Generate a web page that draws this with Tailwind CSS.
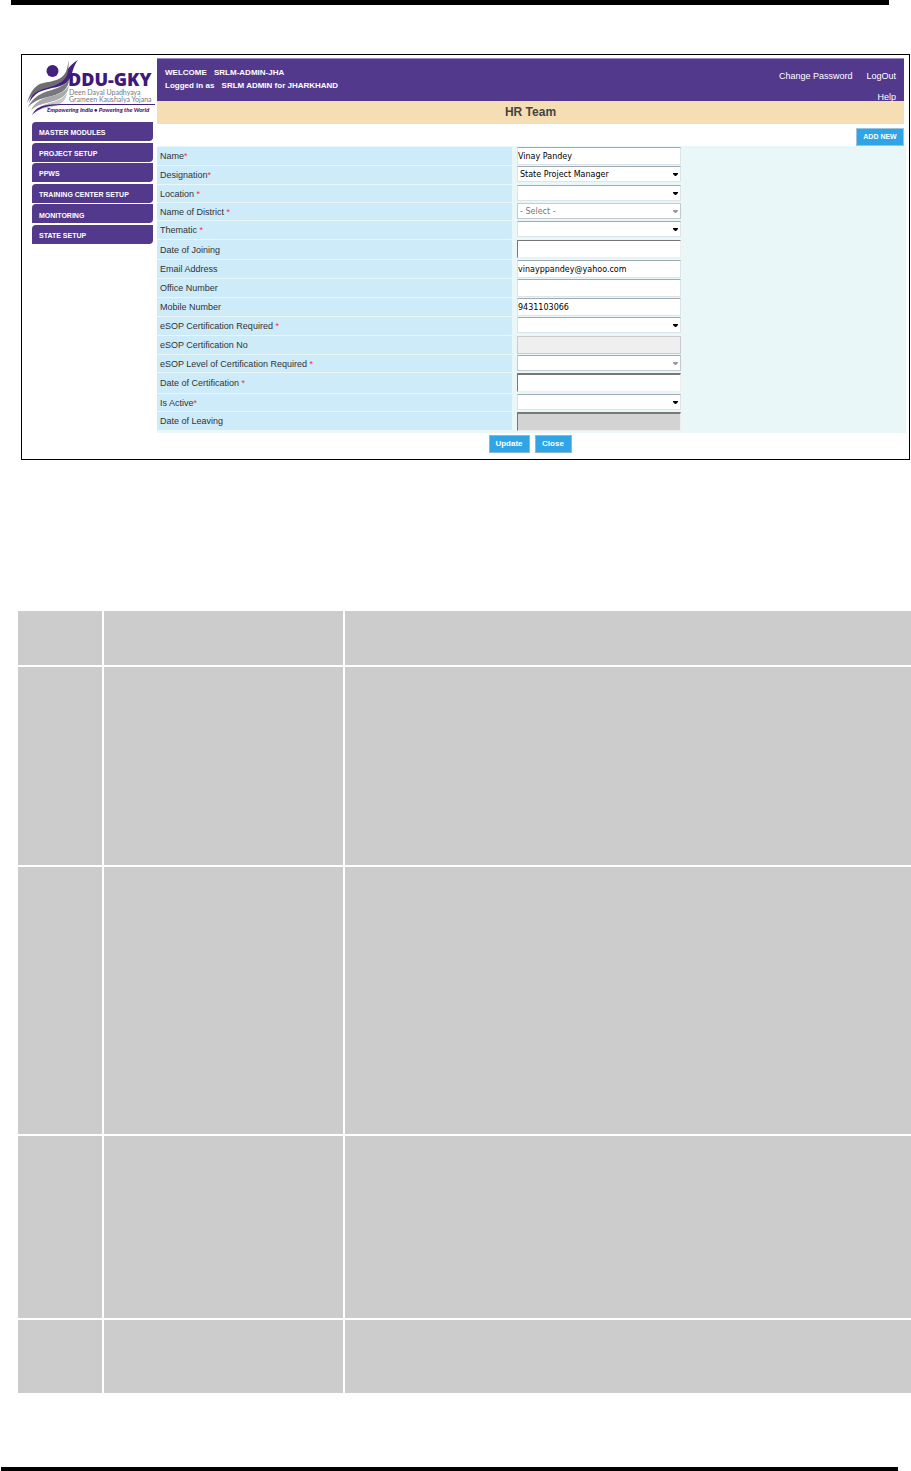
<!DOCTYPE html>
<html lang="en">
<head>
<meta charset="UTF-8">
<meta name="viewport" content="width=device-width, initial-scale=1.0">
<title>HR Team</title>
<script src="https://cdn.jsdelivr.net/npm/@tailwindcss/browser@4"></script>
</head>
<body class="bg-white font-['Liberation_Sans',sans-serif] text-[#333]">

<div class="ml-[11px] mr-[22px] h-[5px] bg-black"></div>

<!-- Application window -->
<main class="mt-[49px] ml-[21px] mr-px flex min-h-[406px] border border-black">

  <!-- Sidebar -->
  <aside class="w-[135px] shrink-0 pl-[5px] pt-1">
    <svg class="block w-full" viewBox="0 0 130 58" role="img" aria-label="DDU-GKY">
      <circle cx="25.500" cy="12" r="6" fill="#45207f"/>
      <path d="M51 1C46 7 46 14 42 21C37 29 23 28 12 33C7 36 4 40 2 44C4 36 8 31 16 28C26 25 35 24 38 16C40 10 44 5 51 1Z" fill="#45207f"/>
      <path d="M42 1C40 7 41 12 36 17C29 24 17 22 11 26C4 31 2 38 0 44C5 34 12 31 20 29C30 26 37 23 40 16C42 11 41 7 42 1Z" fill="#6d6e71"/>
      <path d="M42 20C37 29 25 30 16 34C9 37 4 42 1 48C9 40 17 39 25 37C36 34 42 29 42 20Z" fill="#77787b"/>
      <path d="M42 26C38 34 29 36 21 38C13 40 7 45 4 51C12 45 19 44 27 42C37 39 41 34 42 26Z" fill="#a9aaad"/>
      <path d="M40 34C36 40 30 42 22 44C15 46 10 49 7 53C15 49 22 49 28 47C35 45 39 41 40 34Z" fill="#c8c8cb"/>
      <path d="M5 56C10 46 19 45 41 45H128V46H41C20 46 14 48 5 56Z" fill="#45207f"/>
      <text x="41" y="27" class="fill-[#3d1a7c] font-['Open_Sans',sans-serif] text-[18px] font-extrabold">DDU-GKY</text>
      <text x="42" y="36" class="fill-[#77787b] font-['Lato',sans-serif] text-[7px]">Deen Dayal Upadhyaya</text>
      <text x="42" y="43" class="fill-[#77787b] font-['Lato',sans-serif] text-[7px]">Grameen Kaushalya Yojana</text>
      <text x="20" y="53" class="fill-[#3d1a7c] font-['Lato',sans-serif] text-[6px] font-black italic">Empowering India • Powering the World</text>
    </svg>
    <nav class="mt-[5px] mr-1 ml-[5px] flex h-[122px] flex-col justify-between text-[7px] font-bold text-white">
      <a href="#" class="flex h-[19px] items-center rounded-tl rounded-br bg-[#53398c] pt-1 pl-[7px]">MASTER MODULES</a>
      <a href="#" class="flex h-[19px] items-center rounded-tl rounded-br bg-[#53398c] pt-1 pl-[7px]">PROJECT SETUP</a>
      <a href="#" class="flex h-[19px] items-center rounded-tl rounded-br bg-[#53398c] pt-1 pl-[7px]">PPWS</a>
      <a href="#" class="flex h-[19px] items-center rounded-tl rounded-br bg-[#53398c] pt-1 pl-[7px]">TRAINING CENTER SETUP</a>
      <a href="#" class="flex h-[19px] items-center rounded-tl rounded-br bg-[#53398c] pt-1 pl-[7px]">MONITORING</a>
      <a href="#" class="flex h-[19px] items-center rounded-tl rounded-br bg-[#53398c] pt-1 pl-[7px]">STATE SETUP</a>
    </nav>
  </aside>

  <div class="min-w-0 flex-1 pt-[3px]">
    <!-- Header -->
    <header class="mr-[5px] flex h-[43px] justify-between border-t border-[#9a8bbd] bg-[#53398c] text-white">
      <div class="pt-[7px] pl-2 text-[8px] leading-[13px] font-bold">
        <p>WELCOME <span class="ml-[5px]">SRLM-ADMIN-JHA</span></p>
        <p>Logged in as <span class="ml-[5px]">SRLM ADMIN for JHARKHAND</span></p>
      </div>
      <div class="pt-[7px] pr-2 text-right text-[9px] leading-[21px]">
        <div class="flex gap-[14px]">
          <a href="#">Change Password</a>
          <a href="#">LogOut</a>
        </div>
        <a href="#" class="block">Help</a>
      </div>
    </header>
    <h1 class="mr-[5px] h-[23px] bg-[#f5deb3] text-center text-[12px] leading-[23px] font-bold text-[#444]">HR Team</h1>
    <div class="mr-[5px] flex justify-end pt-1">
      <button class="h-[18px] w-12 border border-[#9cc4dc] bg-[#2fa4e7] text-[7px] font-bold text-white">ADD NEW</button>
    </div>

    <!-- HR team form -->
    <form>
      <div class="mr-[3px] flex flex-col gap-px bg-[#eaf7f9] pt-px pb-[3px] text-[9px] font-medium [&_em]:text-red-500 [&_em]:not-italic [&_input]:block [&_input]:w-[164px] [&_label]:flex [&_label]:w-[355px] [&_label]:items-center [&_label]:bg-[#cdebf9] [&_label]:pt-[2px] [&_label]:pl-[3px] [&_label]:whitespace-pre [&_select]:block [&_select]:h-4 [&_select]:w-[164px] [&_select]:appearance-none">
        <div class="flex h-[18px] gap-[5px]">
          <label for="name">Name<em>*</em></label>
          <input id="name" type="text" value="Vinay Pandey" class="h-[18px] border border-t-[#9eabb3] border-[#dde3e8] bg-white font-['DejaVu_Sans',sans-serif] text-[8px] text-black">
        </div>
        <div class="flex h-[18px] gap-[5px]">
          <label for="designation">Designation<em>*</em></label>
          <div class="relative">
            <select id="designation" class="border border-t-[#9eabb3] border-[#dde3e8] bg-white pt-px pl-[2px] font-['DejaVu_Sans',sans-serif] text-[8px] text-black"><option>State Project Manager</option></select>
            <svg class="pointer-events-none absolute top-[7px] right-[3px] h-[3px] w-[5px]" viewBox="0 0 5 3"><path d="M0 0H5V1L3 3H2L0 1Z" fill="#000"/></svg>
          </div>
        </div>
        <div class="flex h-[17px] gap-[5px]">
          <label for="location">Location <em>*</em></label>
          <div class="relative">
            <select id="location" class="border border-t-[#9eabb3] border-[#dde3e8] bg-white"><option></option></select>
            <svg class="pointer-events-none absolute top-[7px] right-[3px] h-[3px] w-[5px]" viewBox="0 0 5 3"><path d="M0 0H5V1L3 3H2L0 1Z" fill="#000"/></svg>
          </div>
        </div>
        <div class="flex h-[17px] gap-[5px]">
          <label for="district">Name of District <em>*</em></label>
          <div class="relative">
            <select id="district" disabled class="border border-[#c4cacd] bg-white pt-px pl-[2px] font-['DejaVu_Sans',sans-serif] text-[8px] text-[#777]"><option>- Select -</option></select>
            <svg class="pointer-events-none absolute top-[7px] right-[3px] h-[3px] w-[5px]" viewBox="0 0 5 3"><path d="M0 0H5V1L3 3H2L0 1Z" fill="#999"/></svg>
          </div>
        </div>
        <div class="flex h-[18px] gap-[5px]">
          <label for="thematic">Thematic <em>*</em></label>
          <div class="relative">
            <select id="thematic" class="border border-t-[#9eabb3] border-[#dde3e8] bg-white"><option></option></select>
            <svg class="pointer-events-none absolute top-[7px] right-[3px] h-[3px] w-[5px]" viewBox="0 0 5 3"><path d="M0 0H5V1L3 3H2L0 1Z" fill="#000"/></svg>
          </div>
        </div>
        <div class="flex h-[19px] gap-[5px]">
          <label for="joining">Date of Joining</label>
          <input id="joining" type="text" class="h-[18px] border border-t-[#777] border-l-[#777] border-[#eee] bg-white">
        </div>
        <div class="flex h-[18px] gap-[5px]">
          <label for="email">Email Address</label>
          <input id="email" type="text" value="vinayppandey@yahoo.com" class="h-[18px] border border-t-[#9eabb3] border-[#dde3e8] bg-white font-['DejaVu_Sans',sans-serif] text-[8px] text-black">
        </div>
        <div class="flex h-[18px] gap-[5px]">
          <label for="office">Office Number</label>
          <input id="office" type="text" class="h-[18px] border border-t-[#9eabb3] border-[#dde3e8] bg-white">
        </div>
        <div class="flex h-[18px] gap-[5px]">
          <label for="mobile">Mobile Number</label>
          <input id="mobile" type="text" value="9431103066" class="h-[18px] border border-t-[#9eabb3] border-[#dde3e8] bg-white font-['DejaVu_Sans',sans-serif] text-[8px] text-black">
        </div>
        <div class="flex h-[18px] gap-[5px]">
          <label for="esop">eSOP Certification Required <em>*</em></label>
          <div class="relative">
            <select id="esop" class="border border-t-[#9eabb3] border-[#dde3e8] bg-white"><option></option></select>
            <svg class="pointer-events-none absolute top-[7px] right-[3px] h-[3px] w-[5px]" viewBox="0 0 5 3"><path d="M0 0H5V1L3 3H2L0 1Z" fill="#000"/></svg>
          </div>
        </div>
        <div class="flex h-[18px] gap-[5px]">
          <label for="esop-no">eSOP Certification No</label>
          <input id="esop-no" type="text" disabled class="h-[18px] border border-[#c8cccd] bg-[#efefef]">
        </div>
        <div class="flex h-[17px] gap-[5px]">
          <label for="esop-level">eSOP Level of Certification Required <em>*</em></label>
          <div class="relative">
            <select id="esop-level" disabled class="border border-t-[#9eabb3] border-[#c4cacd] bg-white"><option></option></select>
            <svg class="pointer-events-none absolute top-[7px] right-[3px] h-[3px] w-[5px]" viewBox="0 0 5 3"><path d="M0 0H5V1L3 3H2L0 1Z" fill="#999"/></svg>
          </div>
        </div>
        <div class="flex h-[20px] gap-[5px]">
          <label for="certified">Date of Certification <em>*</em></label>
          <input id="certified" type="text" class="h-[19px] border border-t-2 border-t-[#777] border-l-[#777] border-[#eee] bg-white">
        </div>
        <div class="flex h-[17px] gap-[5px]">
          <label for="active">Is Active<em>*</em></label>
          <div class="relative">
            <select id="active" class="border border-t-[#9eabb3] border-[#dde3e8] bg-white"><option></option></select>
            <svg class="pointer-events-none absolute top-[7px] right-[3px] h-[3px] w-[5px]" viewBox="0 0 5 3"><path d="M0 0H5V1L3 3H2L0 1Z" fill="#000"/></svg>
          </div>
        </div>
        <div class="flex h-[18px] gap-[5px]">
          <label for="leaving">Date of Leaving</label>
          <input id="leaving" type="text" disabled class="h-[19px] border border-t-2 border-t-[#777] border-l-[#777] border-[#eee] bg-[#d3d3d3]">
        </div>
      </div>
      <div class="mr-[6px] flex justify-center gap-[5px] pt-[2px]">
        <button type="button" class="h-[18px] w-[41px] border border-[#8fb8d0] bg-[#2fa4e7] text-[8px] font-bold text-white">Update</button>
        <button type="button" class="h-[18px] w-[37px] border border-[#8fb8d0] bg-[#2fa4e7] text-[8px] font-bold text-white">Close</button>
      </div>
    </form>
  </div>
</main>

<!-- Description table -->
<table class="mt-[151px] ml-[18px] w-[calc(100%-18px)] table-fixed border-separate border-spacing-0 [&_td]:border-white [&_td]:bg-[#ccc]">
  <colgroup><col class="w-[86px]"><col class="w-[241px]"><col></colgroup>
  <tbody>
    <tr class="h-14"><td class="border-r-2 border-b-2"></td><td class="border-r-2 border-b-2"></td><td class="border-b-2"></td></tr>
    <tr class="h-[200px]"><td class="border-r-2 border-b-2"></td><td class="border-r-2 border-b-2"></td><td class="border-b-2"></td></tr>
    <tr class="h-[269px]"><td class="border-r-2 border-b-2"></td><td class="border-r-2 border-b-2"></td><td class="border-b-2"></td></tr>
    <tr class="h-[184px]"><td class="border-r-2 border-b-2"></td><td class="border-r-2 border-b-2"></td><td class="border-b-2"></td></tr>
    <tr class="h-[73px]"><td class="border-r-2"></td><td class="border-r-2"></td><td></td></tr>
  </tbody>
</table>

<div class="mt-[74px] ml-px mr-[13px] h-1 bg-black"></div>

</body>
</html>
